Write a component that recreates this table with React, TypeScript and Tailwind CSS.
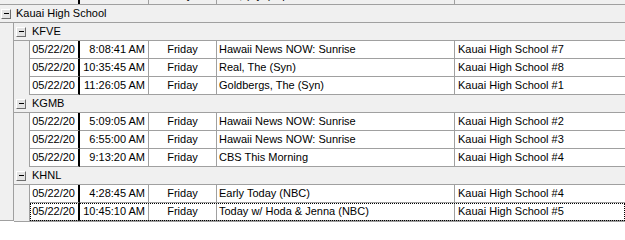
import React from "react";

type Airing = { date: string; time: string; day: string; title: string; location: string };

const stations: { name: string; rows: Airing[] }[] = [
  {
    name: "KFVE",
    rows: [
      { date: "05/22/20", time: "8:08:41 AM", day: "Friday", title: "Hawaii News NOW: Sunrise", location: "Kauai High School #7" },
      { date: "05/22/20", time: "10:35:45 AM", day: "Friday", title: "Real, The (Syn)", location: "Kauai High School #8" },
      { date: "05/22/20", time: "11:26:05 AM", day: "Friday", title: "Goldbergs, The (Syn)", location: "Kauai High School #1" },
    ],
  },
  {
    name: "KGMB",
    rows: [
      { date: "05/22/20", time: "5:09:05 AM", day: "Friday", title: "Hawaii News NOW: Sunrise", location: "Kauai High School #2" },
      { date: "05/22/20", time: "6:55:00 AM", day: "Friday", title: "Hawaii News NOW: Sunrise", location: "Kauai High School #3" },
      { date: "05/22/20", time: "9:13:20 AM", day: "Friday", title: "CBS This Morning", location: "Kauai High School #4" },
    ],
  },
  {
    name: "KHNL",
    rows: [
      { date: "05/22/20", time: "4:28:45 AM", day: "Friday", title: "Early Today (NBC)", location: "Kauai High School #4" },
      { date: "05/22/20", time: "10:45:10 AM", day: "Friday", title: "Today w/ Hoda & Jenna (NBC)", location: "Kauai High School #5" },
    ],
  },
];

// little windows-style collapse button
function CollapseBox() {
  return (
    <div className="w-[10px] h-[10px] shrink-0 flex items-center justify-center bg-[#e3e3e3] border border-t-white border-l-white border-r-[#6d6d6d] border-b-[#6d6d6d]">
      <span className="block w-[5px] h-[1px] bg-black" />
    </div>
  );
}

function DataRow({ row, focused }: { row: Airing; focused?: boolean }) {
  return (
    <div className="flex h-[18px]">
      <div className="w-[16px] shrink-0 bg-[#f0f0f0] border-r border-[#a0a0a0]" />
      <div
        className={
          "flex flex-1 bg-white " +
          (focused ? "outline-1 outline-dotted outline-black -outline-offset-1" : "")
        }
      >
        <div className="w-[50px] shrink-0 flex items-center justify-end pr-[3px] border-b border-b-[#a0a0a0] border-r-2 border-r-black">
          {row.date}
        </div>
        <div className="w-[69px] shrink-0 flex items-center justify-end pr-[3px] border-b border-r border-[#a0a0a0]">
          {row.time}
        </div>
        <div className="w-[68px] shrink-0 flex items-center justify-center border-b border-r border-[#a0a0a0]">
          {row.day}
        </div>
        <div className="w-[238px] shrink-0 flex items-center pl-[2px] border-b border-r border-[#a0a0a0] whitespace-nowrap overflow-hidden">
          {row.title}
        </div>
        <div className="flex-1 flex items-center pl-[3px] border-b border-[#a0a0a0] whitespace-nowrap overflow-hidden">
          {row.location}
        </div>
      </div>
    </div>
  );
}

export default function App() {
  return (
    <div className="w-[625px] h-[240px] bg-white overflow-hidden text-[11px] leading-[13px] text-black font-['Liberation_Sans',Arial,sans-serif]">
      {/* column header, scrolled almost out of view */}
      <div className="flex h-[5px] bg-[#f0f0f0] border-b border-[#a0a0a0] overflow-hidden">
        <div className="w-[30px] shrink-0" />
        <div className="w-[50px] shrink-0 border-r-2 border-black" />
        <div className="w-[69px] shrink-0 border-r border-[#a0a0a0]" />
        <div className="w-[68px] shrink-0 border-r border-[#a0a0a0] flex justify-center">
          <span className="-mt-[11px] whitespace-nowrap">Day</span>
        </div>
        <div className="w-[238px] shrink-0 border-r border-[#a0a0a0] pl-[2px]">
          <div className="-mt-[11px] whitespace-nowrap">Title, (Syn) Episode</div>
        </div>
        <div className="flex-1" />
      </div>

      {/* school group */}
      <div className="flex items-center gap-[5px] h-[18px] pl-[1px] bg-[#f0f0f0] border-b border-[#a0a0a0]">
        <CollapseBox />
        <span>Kauai High School</span>
      </div>

      <div className="flex">
        <div className="w-[14px] shrink-0 h-[198px] bg-[#f0f0f0] border-r border-b border-[#a0a0a0]" />
        <div className="flex-1 flex flex-col">
          {stations.map((st, si) => (
            <div key={st.name} className="flex flex-col">
              <div className="flex items-center gap-[6px] h-[18px] pl-[2px] bg-[#f0f0f0] border-b border-[#a0a0a0]">
                <CollapseBox />
                <span>{st.name}</span>
              </div>
              {st.rows.map((r, ri) => (
                <DataRow
                  key={r.time}
                  row={r}
                  focused={si === stations.length - 1 && ri === st.rows.length - 1}
                />
              ))}
            </div>
          ))}
          <div className="h-[1px] bg-[#a0a0a0]" />
        </div>
      </div>
    </div>
  );
}
